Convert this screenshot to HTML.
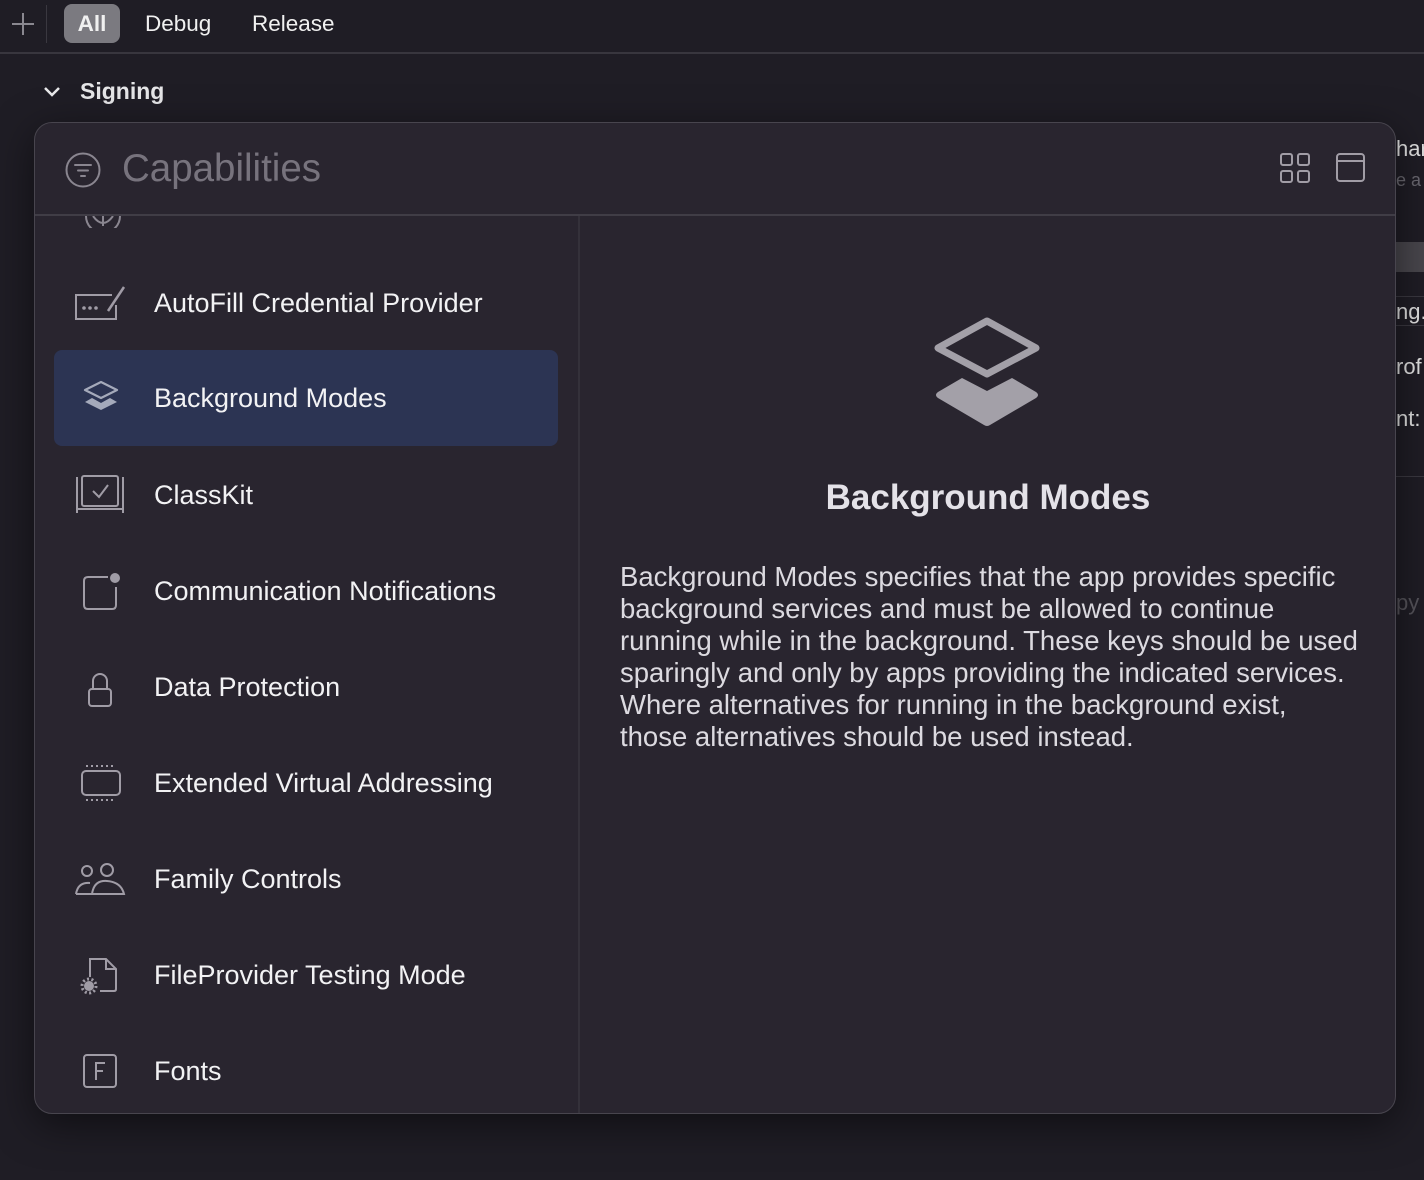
<!DOCTYPE html>
<html><head><meta charset="utf-8"><style>
*{margin:0;padding:0;box-sizing:border-box}
body{width:1424px;height:1180px;background:#1f1d25;font-family:"Liberation Sans",sans-serif;color:#fff;position:relative;overflow:hidden}
.abs{position:absolute}
.tab{position:absolute;top:4px;height:39px;line-height:39px;font-size:22.5px;color:#f0f0f0}
.item{position:absolute;left:54px;width:504px;height:96px}
.item .ic{position:absolute;left:18px;top:26px;width:56px;height:44px}
.item .t{position:absolute;left:100px;top:0;line-height:96px;font-size:27px;color:#f2f2f4}
</style></head><body>
<div class="abs" style="left:10px;top:11px;width:26px;height:26px">
<svg width="26" height="26"><path d="M13 2V24M2 13H24" stroke="#8a8890" stroke-width="2"/></svg></div>
<div class="abs" style="left:46px;top:5px;width:1px;height:38px;background:#3a3840"></div>
<div class="tab" style="left:64px;width:56px;background:#7b7a80;border-radius:8px;text-align:center;font-weight:bold">All</div>
<div class="tab" style="left:145px">Debug</div>
<div class="tab" style="left:252px">Release</div>
<div class="abs" style="left:0;top:52px;width:1424px;height:2px;background:#38363e"></div>
<svg class="abs" style="left:42px;top:84px" width="20" height="16"><path d="M3 4L10 11L17 4" stroke="#e8e8ea" stroke-width="2.5" fill="none"/></svg>
<div class="abs" style="left:80px;top:78px;font-size:23px;font-weight:bold;color:#e6e6e8">Signing</div>
<div class="abs" style="left:1396px;top:136px;font-size:22px;color:#e0e0e0">har</div>
<div class="abs" style="left:1396px;top:170px;font-size:18px;color:#6a6870">e a</div>
<div class="abs" style="left:1396px;top:242px;width:28px;height:30px;background:#48464c"></div>
<div class="abs" style="left:1396px;top:296px;width:28px;height:30px;border-top:1px solid #3a3840;border-bottom:1px solid #3a3840;font-size:22px;color:#e0e0e0;line-height:30px">ng.</div>
<div class="abs" style="left:1396px;top:354px;font-size:22px;color:#e0e0e0">rof</div>
<div class="abs" style="left:1396px;top:406px;font-size:22px;color:#e0e0e0">nt:</div>
<div class="abs" style="left:1396px;top:476px;width:28px;height:1px;background:#3a3840"></div>
<div class="abs" style="left:1396px;top:590px;font-size:22px;color:#55535a">py</div>
<div class="abs" style="left:34px;top:122px;width:1362px;height:992px;background:#29252f;border:1.5px solid #48454e;border-radius:18px;overflow:hidden;box-shadow:0 10px 40px rgba(0,0,0,.5)">
  <svg class="abs" style="left:29px;top:28px" width="38" height="38"><circle cx="19" cy="19" r="16.5" stroke="#8a8690" stroke-width="2" fill="none"/><path d="M11 14H27M14 19.5H24M17 25H21" stroke="#8a8690" stroke-width="2" stroke-linecap="round"/></svg>
  <div class="abs" style="left:87px;top:24px;font-size:38.5px;color:#77737d">Capabilities</div>
  <svg class="abs" style="left:1244px;top:29px" width="32" height="32"><g fill="none" stroke="#a19da6" stroke-width="2"><rect x="2" y="2" width="11" height="11" rx="2"/><rect x="19" y="2" width="11" height="11" rx="2"/><rect x="2" y="19" width="11" height="11" rx="2"/><rect x="19" y="19" width="11" height="11" rx="2"/></g></svg>
  <svg class="abs" style="left:1300px;top:29px" width="32" height="32"><g fill="none" stroke="#a19da6" stroke-width="2"><rect x="2" y="2" width="27" height="27" rx="3"/><path d="M2 9H29"/></g></svg>
  <div class="abs" style="left:0;top:91px;width:1362px;height:2px;background:#403d46"></div>
  <div class="abs" style="left:543px;top:93px;width:2px;height:900px;background:#34313a"></div>
  <svg class="abs" style="left:48px;top:93px" width="40" height="12"><path d="M3 0A17 17 0 0 0 37 0M10 0Q20 14 30 0M20 0V10" stroke="#8a8690" stroke-width="2" fill="none"/></svg>
</div>
<div class="item" style="top:255px"><svg class="ic" viewBox="0 0 56 44"><path d="M40 14H4V38H44V24" stroke="#a09ca6" stroke-width="2" fill="none"/><path d="M36 30L52 6" stroke="#a09ca6" stroke-width="2.5"/><circle cx="12" cy="27" r="1.8" fill="#a09ca6"/><circle cx="18" cy="27" r="1.8" fill="#a09ca6"/><circle cx="24" cy="27" r="1.8" fill="#a09ca6"/></svg><div class="t">AutoFill Credential Provider</div></div>
<div class="item" style="top:350px;background:#2c3453;border-radius:8px"><svg class="ic" viewBox="0 0 56 44"><path d="M29 6L45 14L29 22L13 14Z" stroke="#a5aabb" stroke-width="2.2" fill="none" stroke-linejoin="round"/><path d="M20 22L29 27L38 22L45 26L29 34L13 26Z" fill="#a5aabb"/></svg><div class="t">Background Modes</div></div>
<div class="item" style="top:447px"><svg class="ic" viewBox="0 0 56 44"><path d="M5 4V40M51 4V40M5 36H51" stroke="#a09ca6" stroke-width="2" fill="none"/><rect x="10" y="3" width="36" height="30" rx="2" stroke="#a09ca6" stroke-width="2" fill="none"/><path d="M21 18L27 24L36 12" stroke="#a09ca6" stroke-width="2" fill="none"/></svg><div class="t">ClassKit</div></div>
<div class="item" style="top:543px"><svg class="ic" viewBox="0 0 56 44"><path d="M36 8H16Q12 8 12 12V36Q12 40 16 40H40Q44 40 44 36V18" stroke="#a09ca6" stroke-width="2" fill="none"/><circle cx="43" cy="9" r="5" fill="#a09ca6"/></svg><div class="t">Communication Notifications</div></div>
<div class="item" style="top:639px"><svg class="ic" viewBox="0 0 56 44"><path d="M21 24V16A7 7 0 0 1 35 16V24" stroke="#a09ca6" stroke-width="2" fill="none"/><rect x="17" y="24" width="22" height="17" rx="3" stroke="#a09ca6" stroke-width="2" fill="none"/></svg><div class="t">Data Protection</div></div>
<div class="item" style="top:735px"><svg class="ic" viewBox="0 0 56 44"><rect x="10" y="10" width="38" height="24" rx="4" stroke="#a09ca6" stroke-width="2" fill="none"/><path d="M14 5H44M14 39H44" stroke="#a09ca6" stroke-width="2" stroke-dasharray="2 3"/></svg><div class="t">Extended Virtual Addressing</div></div>
<div class="item" style="top:831px"><svg class="ic" viewBox="0 0 56 44"><circle cx="15" cy="14" r="5" stroke="#a09ca6" stroke-width="2" fill="none"/><circle cx="35" cy="13" r="6" stroke="#a09ca6" stroke-width="2" fill="none"/><path d="M4 37Q6 25 18 26M20 37Q22 23 35 24Q49 25 52 37Z" stroke="#a09ca6" stroke-width="2" fill="none"/><path d="M4 37H20" stroke="#a09ca6" stroke-width="2"/></svg><div class="t">Family Controls</div></div>
<div class="item" style="top:927px"><svg class="ic" viewBox="0 0 56 44"><path d="M18 24V6H34L44 16V36Q44 38 42 38H28M34 6V16H44" stroke="#a09ca6" stroke-width="2" fill="none"/><circle cx="17" cy="33" r="5" fill="#a09ca6"/><circle cx="17" cy="33" r="7" stroke="#a09ca6" stroke-width="3" stroke-dasharray="2 2.4" fill="none"/></svg><div class="t">FileProvider Testing Mode</div></div>
<div class="item" style="top:1023px"><svg class="ic" viewBox="0 0 56 44"><rect x="12" y="6" width="32" height="32" rx="3" stroke="#a09ca6" stroke-width="2" fill="none"/><path d="M24 31V14H33M24 22H31" stroke="#a09ca6" stroke-width="2" fill="none"/></svg><div class="t">Fonts</div></div>
<svg class="abs" style="left:926px;top:312px" width="122" height="124" viewBox="0 0 122 124"><path d="M61 9L110 36L61 62L12 36Z" stroke="#a3a0a8" stroke-width="7" fill="none" stroke-linejoin="round"/><path d="M36 66L61 79L86 66L110 80Q114 83 110 86L64 113Q61 115 58 113L12 86Q8 83 12 80Z" fill="#a3a0a8"/></svg>
<div class="abs" style="left:580px;width:816px;top:478px;text-align:center;font-size:35px;font-weight:bold;color:#e4e2e8">Background Modes</div>
<div class="abs" style="left:620px;top:561px;width:760px;white-space:nowrap;font-size:27.5px;line-height:32px;color:#dcdae0">Background Modes specifies that the app provides specific<br>background services and must be allowed to continue<br>running while in the background. These keys should be used<br>sparingly and only by apps providing the indicated services.<br>Where alternatives for running in the background exist,<br>those alternatives should be used instead.</div>
</body></html>
